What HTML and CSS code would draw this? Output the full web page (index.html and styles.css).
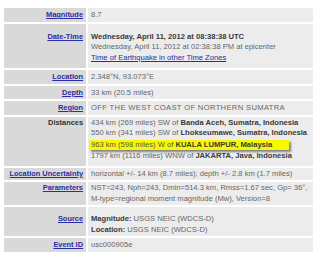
FILE: index.html
```html
<!DOCTYPE html>
<html>
<head>
<meta charset="utf-8">
<link rel="stylesheet" href="styles.css">
</head>
<body>
<table class="eq">
  <tr class="r-one">
    <th><a href="#">Magnitude</a></th>
    <td>8.7</td>
  </tr>
  <tr class="r-date">
    <th><a href="#">Date-Time</a></th>
    <td><b>Wednesday, April 11, 2012 at 08:38:38 UTC</b><br>Wednesday, April 11, 2012 at 02:38:38 PM at epicenter<br><a href="#" class="plain">Time of Earthquake in other Time Zones</a></td>
  </tr>
  <tr class="r-one">
    <th><a href="#">Location</a></th>
    <td>2.348°N, 93.073°E</td>
  </tr>
  <tr class="r-one">
    <th><a href="#">Depth</a></th>
    <td>33 km (20.5 miles)</td>
  </tr>
  <tr class="r-one">
    <th><a href="#">Region</a></th>
    <td class="caps">OFF THE WEST COAST OF NORTHERN SUMATRA</td>
  </tr>
  <tr class="r-dist">
    <th class="nolink">Distances</th>
    <td>434 km (269 miles) SW of <b>Banda Aceh, Sumatra, Indonesia</b><br>550 km (341 miles) SW of <b>Lhokseumawe, Sumatra, Indonesia</b><br><span class="hl">963 km (598 miles) W of <b>KUALA LUMPUR, Malaysia</b></span><br>1797 km (1116 miles) WNW of <b>JAKARTA, Java, Indonesia</b></td>
  </tr>
  <tr class="r-lu">
    <th><a href="#">Location Uncertainty</a></th>
    <td>horizontal +/- 14 km (8.7 miles); depth +/- 2.8 km (1.7 miles)</td>
  </tr>
  <tr class="r-param">
    <th><a href="#">Parameters</a></th>
    <td>NST=243, Nph=243, Dmin=514.3 km, Rmss=1.67 sec, Gp= 36°,<br>M-type=regional moment magnitude (Mw), Version=8</td>
  </tr>
  <tr class="r-src">
    <th><a href="#">Source</a></th>
    <td><b>Magnitude:</b> USGS NEIC (WDCS-D)<br><b>Location:</b> USGS NEIC (WDCS-D)</td>
  </tr>
  <tr class="r-one">
    <th><a href="#">Event ID</a></th>
    <td>usc000905e</td>
  </tr>
</table>
</body>
</html>
```

FILE: styles.css
```css
body {
  margin: 0;
  background: #ffffff;
  font-family: "Liberation Sans", Arial, sans-serif;
}

.eq {
  border-spacing: 2px;
  margin: 6px 0 0 2px;
  width: 313px;
  table-layout: fixed;
  font-size: 7.6px;
  line-height: 10.5px;
}

.eq th {
  width: 76px;
  background: #d9d9d9;
  text-align: right;
  font-weight: bold;
  padding: 2px 3px 1px;
  vertical-align: top;
  white-space: nowrap;
  font-size: 7.4px;
}

.eq th a {
  color: #2b2ba6;
  text-decoration: underline;
}

.eq th.nolink {
  color: #333333;
}

.eq td {
  background: #ececec;
  color: #666666;
  padding: 2px 3px 1px;
  vertical-align: top;
  white-space: nowrap;
}

.eq td.caps {
  letter-spacing: 0.35px;
}

.eq td b {
  color: #3a3a3a;
}

.eq td a.plain {
  color: #2b2ba6;
  text-decoration: underline;
}

.r-date th,
.r-date td {
  padding-top: 8px;
  padding-bottom: 5px;
}

.r-dist th,
.r-dist td {
  padding-top: 1px;
  padding-bottom: 4px;
}

.r-lu th,
.r-lu td {
  padding-top: 1px;
  padding-bottom: 1px;
}

.r-param th,
.r-param td {
  padding-top: 1px;
  padding-bottom: 1px;
}

.r-src th,
.r-src td {
  padding-top: 7px;
  padding-bottom: 1px;
}

.hl {
  display: inline-block;
  width: 196px;
  margin: 1px 0 1px -2px;
  padding: 0 2px;
  background: #f8f800;
  box-shadow: 2px 2px 2px rgba(0, 0, 0, 0.45);
  color: #555555;
}
```
